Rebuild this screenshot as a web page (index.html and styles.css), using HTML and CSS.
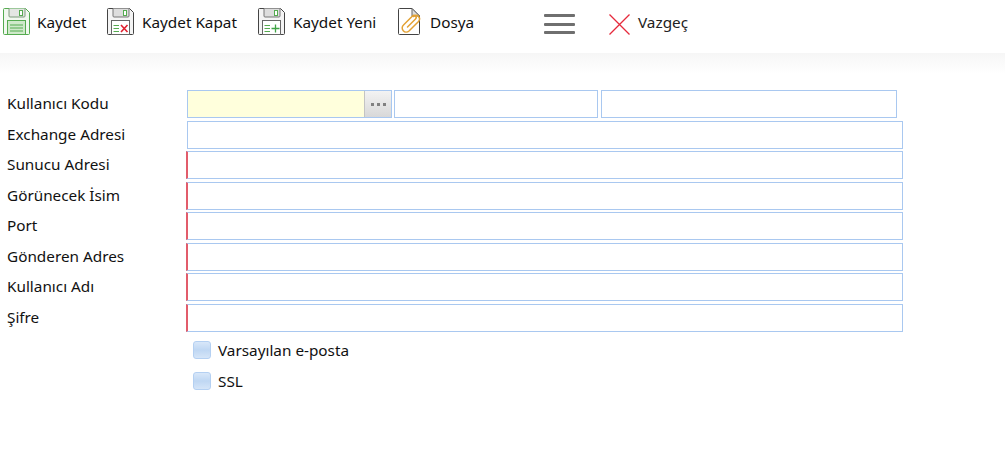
FILE: index.html
```html
<!DOCTYPE html>
<html lang="tr">
<head>
<meta charset="utf-8">
<title>E-posta Hesabı</title>
<link rel="stylesheet" href="styles.css">
</head>
<body>
<header class="toolbar">
  <button class="tool tool-save">
    <svg class="icon" width="27" height="27" viewBox="0 0 27 27" fill="none">
      <path d="M1.500 .5H22.500L26.500 4.500V25.500a1 1 0 0 1-1 1H1.500a1 1 0 0 1-1-1V1.500a1 1 0 0 1 1-1Z" fill="#f1f8ef" stroke="#55ab50"/>
      <path d="M6 .5V8a1 1 0 0 0 1 1H21a1 1 0 0 0 1-1V.5" fill="#e4e6e3" stroke="#7f9c7d"/>
      <rect x="16.500" y="2.500" width="3" height="5" fill="#fff" stroke="#55ab50"/>
      <rect x="4.500" y="12.500" width="18" height="14" fill="#cfe9ca" stroke="#55ab50"/>
      <path d="M7 17H20M7 20H20M7 23H20" stroke="#55ab50"/>
    </svg>
    <span class="tool-text">Kaydet</span>
  </button>
  <button class="tool tool-close">
    <svg class="icon" width="27" height="27" viewBox="0 0 27 27" fill="none">
      <path d="M1.500 .5H22.500L26.500 4.500V25.500a1 1 0 0 1-1 1H1.500a1 1 0 0 1-1-1V1.500a1 1 0 0 1 1-1Z" fill="#f4f4f4" stroke="#444"/>
      <path d="M6 .5V8a1 1 0 0 0 1 1H21a1 1 0 0 0 1-1V.5" fill="#ddd" stroke="#777"/>
      <rect x="16.500" y="2.500" width="3" height="5" fill="#fff" stroke="#55ab50"/>
      <rect x="4.500" y="12.500" width="18" height="14" fill="#fff" stroke="#666"/>
      <path d="M6.500 17.500H12M6.500 20.500H12M6.500 23.500H12" stroke="#55ab50"/>
      <path d="M14 17 20.500 24M20.500 17 14 24" stroke="#e0202f" stroke-width="1.600"/>
    </svg>
    <span class="tool-text">Kaydet Kapat</span>
  </button>
  <button class="tool tool-new">
    <svg class="icon" width="27" height="27" viewBox="0 0 27 27" fill="none">
      <path d="M1.500 .5H22.500L26.500 4.500V25.500a1 1 0 0 1-1 1H1.500a1 1 0 0 1-1-1V1.500a1 1 0 0 1 1-1Z" fill="#f4f4f4" stroke="#444"/>
      <path d="M6 .5V8a1 1 0 0 0 1 1H21a1 1 0 0 0 1-1V.5" fill="#ddd" stroke="#777"/>
      <rect x="16.500" y="2.500" width="3" height="5" fill="#fff" stroke="#55ab50"/>
      <rect x="4.500" y="12.500" width="18" height="14" fill="#fff" stroke="#666"/>
      <path d="M6.500 17.500H12M6.500 20.500H12M6.500 23.500H12" stroke="#55ab50"/>
      <path d="M17.500 16.500V24.500M13.500 20.500H21.500" stroke="#3fa345" stroke-width="1.300"/>
    </svg>
    <span class="tool-text">Kaydet Yeni</span>
  </button>
  <button class="tool tool-file">
    <svg class="icon" width="24" height="27" viewBox="0 0 24 27" fill="none">
      <path d="M1.500 .5H14L21.500 8V25.500a1 1 0 0 1-1 1H1.500a1 1 0 0 1-1-1V1.500a1 1 0 0 1 1-1Z" fill="#fff" stroke="#444"/>
      <path d="M14 .5V8H21.500Z" fill="#ddd" stroke="#666"/>
      <path d="M9.500 19 17.500 11a2 2 0 0 0-3-3L5.500 17a4 4 0 0 0 5.500 6L20.500 13.500c3-3.500-1.500-8.500-5-5" stroke="#e3a133" stroke-width="1.500" stroke-linecap="round"/>
    </svg>
    <span class="tool-text">Dosya</span>
  </button>
  <button class="menu" aria-label="Menü">
    <span class="bar"></span><span class="bar"></span><span class="bar"></span>
  </button>
  <button class="tool tool-cancel">
    <svg class="icon-x" width="21" height="21" viewBox="0 0 21 21" fill="none">
      <path d="M.5 .5 20.500 20.500M20.500 .5 .5 20.500" stroke="#e52a3c" stroke-width="1.300"/>
    </svg>
    <span class="tool-text">Vazgeç</span>
  </button>
</header>
<div class="fade"></div>
<form class="form">
  <label class="label">Kullanıcı Kodu</label>
  <div class="code-row">
    <div class="lookup">
      <input class="lookup-input" type="text">
      <span class="dots"><i class="dot"></i><i class="dot"></i><i class="dot"></i></span>
    </div>
    <input class="field field-mid" type="text">
    <input class="field field-end" type="text">
  </div>
  <label class="label">Exchange Adresi</label>
  <input class="field" type="text">
  <label class="label">Sunucu Adresi</label>
  <input class="field required" type="text">
  <label class="label">Görünecek İsim</label>
  <input class="field required" type="text">
  <label class="label">Port</label>
  <input class="field required" type="text">
  <label class="label">Gönderen Adres</label>
  <input class="field required" type="text">
  <label class="label">Kullanıcı Adı</label>
  <input class="field required" type="text">
  <label class="label">Şifre</label>
  <input class="field required" type="password">
  <div class="checks">
    <div class="check"><span class="box"></span><span>Varsayılan e-posta</span></div>
    <div class="check"><span class="box"></span><span>SSL</span></div>
  </div>
</form>
</body>
</html>
```
FILE: styles.css
```css
* { box-sizing: border-box; }
html, body { margin: 0; padding: 0; background: #fff; }
body {
  font-family: "Noto Sans", "DejaVu Sans", sans-serif;
  font-size: 15.3px;
  color: #111;
  overflow: hidden;
}
button { font: inherit; color: inherit; background: none; border: 0; padding: 0; }

.toolbar { height: 53px; display: flex; align-items: flex-start; padding: 8px 0 0 3px; background: #fff; }
.tool { display: flex; align-items: center; gap: 8px; height: 27px; }
.tool-text { margin-top: 1px; }
.tool-save { width: 104px; gap: 7px; }
.tool-close { width: 151px; }
.tool-new { width: 140px; }
.tool-file { width: 146px; }
.tool-cancel { margin-left: 34px; color: #222; }
.icon-x { margin-top: 5px; }
.menu { width: 31px; height: 20px; margin-top: 6px; display: flex; flex-direction: column; justify-content: space-between; }
.bar { height: 3px; background: #6f6f6f; border-radius: 1px; display: block; }

.fade { height: 21px; background: linear-gradient(#f6f6f6, #fff); margin-bottom: 16px; }

.form { display: grid; grid-template-columns: 180px 716px; row-gap: 2.5px; padding-left: 7px; grid-auto-rows: 28px; align-items: center; }
.label { line-height: 29.5px; }
.field { height: 28px; width: 100%; border: 1px solid #a9c8f0; background: #fff; padding: 0 4px; outline: 0; display: block; }
.required { border-left: 2px solid #e25c6b; width: calc(100% + 1px); margin-left: -1px; }
.code-row { display: flex; height: 28px; }
.lookup { width: 205px; display: flex; border: 1px solid #a9c8f0; height: 28px; }
.lookup-input { flex: 1; min-width: 0; border: 0; background: #ffffdc; outline: 0; border-right: 1px solid #c4c4c4; }
.dots { width: 26px; background: linear-gradient(#f3f3f3, #d8d8d8); display: flex; align-items: center; justify-content: center; gap: 3px; }
.dot { width: 3px; height: 3px; background: #808080; display: block; }
.field-mid { width: 204px; margin-left: 2px; }
.field-end { width: 296px; margin-left: 3px; }

.checks { grid-column: 2; grid-row: span 2; align-self: start; display: flex; flex-direction: column; gap: 13px; padding: 7px 0 0 6px; }
.check { display: flex; align-items: center; gap: 7px; height: 18px; }
.box { width: 18px; height: 18px; border: 1px solid #b4d0f2; border-radius: 3px; background: linear-gradient(#d8e7f9 0, #bfd7f3 50%, #d5e5f8 100%); }
```
